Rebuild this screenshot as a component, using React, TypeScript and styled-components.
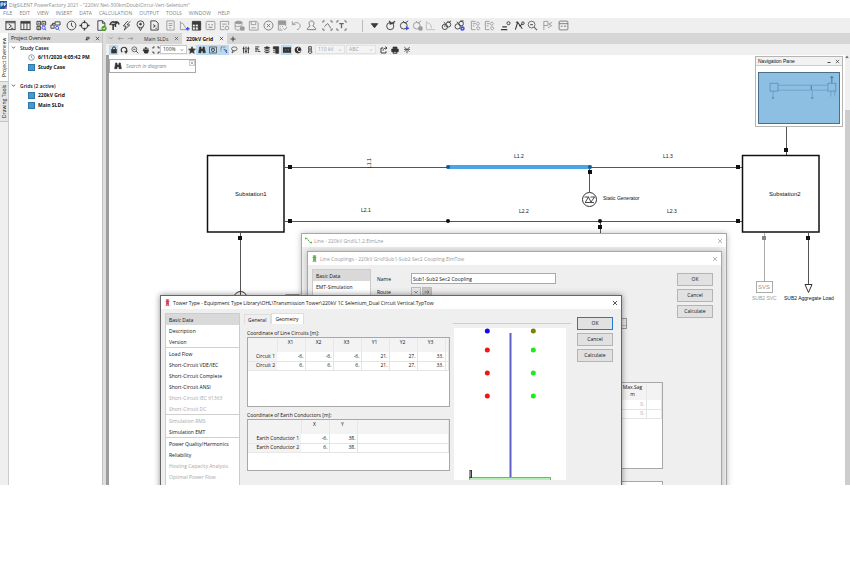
import React from "react";
import styled, { createGlobalStyle, css } from "styled-components";

const GlobalStyle = createGlobalStyle`
  * { box-sizing: border-box; }
  body {
    margin: 0;
    background: #fff;
    color: #111;
    font: 5px/8px "Open Sans", "Noto Sans", sans-serif;
  }
  button, input, select { font: inherit; color: inherit; margin: 0; padding: 0; border: 0; background: none; }
  button { cursor: pointer; }
`;

/* ---------- icons, drawn on a 12 x 12 grid ---------- */

const BLUE = "#3a55e8";

const icons: Record<string, React.ReactNode> = {
  console: <><rect x="1" y="1.5" width="10" height="9" /><path d="M1 3h10M4 4.5l3 2-3 2.5M6.5 9H9" /></>,
  columns: <><rect x="1" y="1.5" width="10" height="9" /><path d="M1 3h10" strokeWidth="1.8" /><path d="M4.2 3v7.5M7.6 3v7.5" /></>,
  modules: <><path d="M1 1.500h4v4H1zM6.500 1.500h4v4h-4zM1 7h4v3.500H1z" /><path d="M2 3.500h2M7.500 3.500h2M2 8.800h2" /><circle cx="8.300" cy="8.500" r="1.800" stroke={BLUE} /><path d="M9.600 9.800l1.500 1.400" stroke={BLUE} /></>,
  network: <><path d="M5.500 2h5.500v3.500H5.500zM1 5.500h3.500v3.500H1zM2.700 5.500V3.700h2.800" /><circle cx="7.800" cy="8.600" r="1.700" stroke={BLUE} /><path d="M9 9.800l1.500 1.400" stroke={BLUE} /></>,
  clock: <><circle cx="6" cy="6" r="4.800" /><path d="M6 3v3.200l2 1.300" /></>,
  target: <><circle cx="6" cy="6" r="3.600" /><path d="M6 .5v3M6 8.500v3M.5 6h3M8.500 6h3" strokeWidth="1.600" /></>,
  fileCheck: <><path d="M2 .8h5l2.700 2.700v7.700H2zM7 .8v2.700h2.700" /><circle cx="8.800" cy="9" r="2.800" fill="#45a81c" stroke="none" /><path d="M7.500 9l1 1 1.600-1.900" stroke="#fff" /></>,
  pylon: <><path d="M1 5.500C2 2 4 1.500 6 2.500c2-1 4-.5 5 2.500M4.500 11V4M7 7.500V4M2.500 5h4l2-2" strokeWidth="1.700" /></>,
  bolt: <path d="M7.500 1L2.500 6.500l3 .3L3.500 11 9.500 5.500l-3-.3L10 1.500" />,
  pin: <><circle cx="6" cy="4.700" r="3.800" /><circle cx="6" cy="4.500" r="1" fill="currentColor" /><path d="M4 8l2 3.500L8 8" /></>,
  script: <><path d="M2 1h5.500L10 3.500V11H2z" /><path d="M4.500 5l2.500 1.500L4.500 8M7 9h1.500" /></>,
  page: <><path d="M2 1h8v10H2z" /><path d="M4 4h4M4 6h4M4.500 8.500h2.500" /></>,
  curve: <><path d="M1.500 1.500v9H10M2 3c4 0 4 6 6 6" /><path d="M9.500 7.500v4M7.500 9.500h4" stroke={BLUE} strokeWidth="1.500" /></>,
  tableDark: <><path d="M1.500 1.500h9v3h-9z" fill="currentColor" /><path d="M8 4h2.500v7H8z" fill="currentColor" /><path d="M1.500 4v7H8M4.700 4v7M1.500 7.500H8" /></>,
  dots: <><rect x="1.200" y="1.500" width="9.600" height="9" rx="1" /><path d="M3.500 5h1.500M7 5h1.500M4 8h4" strokeWidth="1.500" /></>,
  dotsEdit: <><path d="M10.500 5.500V1.500H1.500v9H6" /><path d="M3.500 4.500h5M3.500 7h2" /><circle cx="8.700" cy="8.800" r="2" /></>,
  database: <><ellipse cx="5" cy="2.700" rx="3.800" ry="1.400" fill="currentColor" /><path d="M1.200 2.700v7c1 1.500 4 1.500 5 1M8.800 2.700v3M1.200 6c1 1.500 4 1.500 7 0" /><path d="M7 7.500h4v3.500H7z" fill="currentColor" /></>,
  save: <><path d="M1.500 1.500h8l1.500 1.500v8H1.500z" /><path d="M3.500 1.500V5h5V1.500M3.500 8.500h5" /></>,
  cancel: <><circle cx="6" cy="6" r="4.900" /><path d="M4.200 4.200l3.600 3.600M7.800 4.200L4.200 7.800" /></>,
  calc: <><path d="M1.500 1h8v4h-8z" fill="currentColor" /><path d="M1.500 5v6H6M9.500 5v1.500M3 7.200h1M5.500 7.200h1M3 9.300h1M7 9l1.500 1.700L11 7.500" /></>,
  undo: <path d="M1.500 1.500V5h3.500M1.700 5C4 1.500 10 2.500 10 6.500 10 9 8 10 6.500 10.700" />,
  stamp: <path d="M4.500 6.500C2 3 4 1 6 1s4 2 1.500 5.500L10.500 9v1.500h-9V9z" />,
  framePeak: <><path d="M3 1H1v2M9 1h2v2M3 11H1V9M9 11h2V9" /><path d="M2.500 7.500C4 6.500 5 4 6 4s2 3 3.500 5" /></>,
  frameText: <><path d="M3 1H1v2M9 1h2v2M3 11H1V9M9 11h2V9" /><path d="M3.500 4h5M6 4v5" strokeWidth="1.400" /></>,
  triangle: <path d="M2.500 4h7L6 8.500z" fill="currentColor" />,
  timer: <><circle cx="5.700" cy="6.700" r="3.900" /><path d="M4.500 1l2.500 3 4-2.700M5.700 2.800v2.500M9 3l1 1" strokeWidth="1.300" /></>,
  timerRun: <><circle cx="5.200" cy="6.200" r="3.700" /><path d="M4.500 1l2 2.500L10 1" /><path d="M7.500 6.500l4 2.500-4 2.500z" fill={BLUE} stroke="none" /></>,
  timerStop: <><circle cx="5.200" cy="6.200" r="3.700" /><path d="M4.500 1l2 2.500L10 1" /><path d="M7.500 7.500h3.500V11H7.500z" fill="currentColor" /></>,
  axes: <path d="M1.500 1.500v9H11M2 3c3 0 5 2 5 6" />,
  twins: <><circle cx="4.200" cy="7.500" r="2.900" /><circle cx="8" cy="5" r="2.700" /><path d="M3 2.500l2 1.500M7 1l1.500 1.500L11 1M4.200 6v1.500" /></>,
  twinsGear: <><circle cx="4" cy="7" r="2.900" /><circle cx="7.800" cy="4" r="2.500" /><path d="M3 2l2 1.500M7 1h3.500" /><circle cx="9.200" cy="9.300" r="1.600" stroke={BLUE} strokeWidth="1.800" /></>,
  docStar: <><path d="M6 1.500H1.500v9H6M3 4h3M3 6.500h2" /><path d="M8.500 2l2 2-2 2-2-2zM7 9l1.500-2L11 9l-2 2z" /></>,
  bars: <><path d="M1 10.500h7M2.500 7.500h5" strokeWidth="1.600" /><circle cx="9.300" cy="3.500" r="1.700" /></>,
  branch: <><path d="M1.500 10.500L4 2.500 9 9.500M2 2.500h2.500M6 7L9 4.500" strokeWidth="1.200" /><circle cx="9.700" cy="3.500" r="1.400" /></>,
  zoom: <><circle cx="5" cy="5" r="3.700" /><path d="M7.700 7.700L11 11M3.500 5h3" strokeWidth="1.300" /></>,
  flag: <><path d="M2 11V1.500h4.500V6H2" /><path d="M11 2.500L7.500 4.500 11 6.500M6.500 8.500L9.500 7" /></>,
  report: <><rect x="1.200" y="1.200" width="9.600" height="9.600" rx="1" /><path d="M1.200 4h9.600M3 6.800h2M6.500 6.800h2.500" /></>,
  lock: <><path d="M3.800 5V3.500a2.200 2.200 0 014.400 0V5" strokeWidth="1.500" /><rect x="2.500" y="5" width="7" height="5.500" fill="currentColor" /></>,
  refresh: <><path d="M3.500 9.500A4.200 4.200 0 119 9" strokeWidth="1.700" /><path d="M7 8l4-.5-2 3.700z" fill="currentColor" /></>,
  hand: <path d="M3 6V3.500M5 5V1.500M7 5V2M9 5.500V3.500M1.500 6.500L3.500 8.500 4 10.500h4.500L9.500 6H3z" fill="currentColor" strokeWidth="1.500" />,
  frame: <path d="M4 1.500H1.500V4M8 1.500h2.500V4M4 10.500H1.500V8M8 10.500h2.500V8" strokeWidth="1.400" />,
  star: <path d="M6 1l1.500 3.500 3.700.3-2.800 2.500.9 3.700L6 9l-3.300 2 .9-3.700L.8 4.800l3.700-.3z" fill="currentColor" />,
  binoculars: <path d="M2.500 1.500h2v3h3v-3h2L11 10H7.500V7h-3v3H1z" fill="currentColor" />,
  monitor: <><rect x="1" y="1.500" width="10" height="9" /><path d="M4 4h4v3.500L6 9 4 7.500z" strokeWidth="1.300" /></>,
  select: <><path d="M8 1.500H1.500V8" strokeDasharray="1.500 1" /><path d="M5.500 5l5 2-2 .8 2 2.700" stroke="#2b4fa0" strokeWidth="1.400" /></>,
  lasso: <><ellipse cx="6.500" cy="4.200" rx="4.200" ry="2.900" /><path d="M4 6.500L3 10.500l4-3" /></>,
  sliders: <path d="M2.500 1v10M6 1v10M9.500 1v10M1 4h3M4.500 8h3M8 4h3" strokeWidth="1.500" />,
  list: <path d="M2 1.500h7M2 4h5M2 6.500h7M2 9h4M7 9.500h4" strokeWidth="1.500" />,
  layers: <path d="M6 1l4 1.700-4 1.700-4-1.700zM2 5.500l4 1.800 4-1.800M2 8.500l4 2 4-2" fill="currentColor" strokeWidth="1.200" />,
  book: <><path d="M2 1h8v10H5.500V4.500H2z" fill="currentColor" /><path d="M1.500 7h3M1.500 9.500h3" /></>,
  chip: <><rect x="0" y="2.500" width="12" height="7" fill="currentColor" /><path d="M3 6h2M7 6h2" stroke="#8fb6dc" /></>,
  moon: <><circle cx="6" cy="6" r="4.600" fill="currentColor" /><path d="M7 2.500a3 3 0 103 5" stroke="#f4f4f4" strokeWidth="1.500" /></>,
  gauge: <path d="M4 1h4v6l1 2.500L7 11H5L3.500 9.500 4 7zM6 3v6" strokeWidth="1.300" />,
  open: <path d="M5 3H1.500v7.500H9V8M4.500 7C5 4 7 3 10 3M8 1l2.500 2L8 5" strokeWidth="1.400" />,
  printer: <><path d="M3 1.500h6V4H3zM1 4.500h10v4H1zM3 7.500h6v3.500H3z" fill="currentColor" /><path d="M4 9.500h4" stroke="#fff" /></>,
  wand: <path d="M6 5.500V11M2 1.500l4 4 4-4M2.500 8.500l1.500-2M9.500 8.500L8 6.500M1.500 5h9" strokeWidth="1.200" />,
  linePath: <path d="M1 1v3M1 2.500h3M4.500 4l3 4M8 9.500h3M11 8v3" stroke="#58a23d" strokeWidth="1.600" />,
  tower: <path d="M3 1.500h6M2.500 4.500h7M4 7.500h4M3 10.800h6M4.800 1.500L4 11M7.200 1.500L8 11M6 1v9" strokeWidth="1.200" />,
  close: <path d="M2 2l8 8M10 2l-8 8" strokeWidth="1.400" />,
  pinned: <path d="M4 3h6v4H4zM2 9h5M3 7v3" strokeWidth="1.600" />,
  minimize: <path d="M3 9h6" strokeWidth="1.500" />,
  down: <path d="M2.500 4L6 8l3.500-4" strokeWidth="1.500" />,
  left: <path d="M11 6H2M5 3L2 6l3 3" strokeWidth="1.400" />,
  right: <path d="M1 6h9M7 3l3 3-3 3" strokeWidth="1.400" />,
  up: <path d="M2 8l4-5 4 5z" fill="currentColor" />,
  plus: <path d="M6 1v10M1 6h10" strokeWidth="1.800" />,
};

const Glyph = styled.svg<{ $size: number }>`
  display: block;
  flex: none;
  width: ${(p) => p.$size}px;
  height: ${(p) => p.$size}px;
  fill: none;
  stroke: currentColor;
  stroke-width: 1;
`;

const Icon = ({ name, size = 11 }: { name: string; size?: number }) => (
  <Glyph $size={size} viewBox="0 0 12 12" aria-hidden="true">{icons[name]}</Glyph>
);

/* ---------- application frame ---------- */

const Shell = styled.div`
  display: flex;
  flex-direction: column;
  overflow: hidden;
`;

const TitleBar = styled.header`
  display: flex;
  align-items: center;
  gap: 2px;
  height: 9px;
  color: #8c8c8c;
`;

const Logo = styled.svg`
  width: 7px;
  height: 8px;
`;

const MenuBar = styled.nav`
  display: flex;
  align-items: center;
  gap: 7px;
  height: 9px;
  padding-left: 3px;
`;

const MenuItem = styled.button`
  color: #808080;
  line-height: 9px;
`;

const MainToolbar = styled.div`
  display: flex;
  align-items: center;
  height: 15px;
  padding-left: 5px;
  background: #efefef;
`;

const Tool = styled.button<{ $w: number; $tone?: string }>`
  flex: none;
  width: ${(p) => p.$w}px;
  color: ${(p) => p.$tone ?? "#4a4a4a"};
`;

const Divider = styled.span`
  flex: none;
  width: 1px;
  height: 12px;
  margin: 0 6px 0 12px;
  background: #bbb;
`;

const Workspace = styled.div`
  display: flex;
  align-items: stretch;
`;

const Rail = styled.div`
  display: flex;
  flex-direction: column;
  flex: none;
  width: 9px;
  background: #efefef;
  border-right: 1px solid #ccc;
`;

const RailTab = styled.button<{ $active?: boolean; $h: number }>`
  height: ${(p) => p.$h}px;
  writing-mode: vertical-rl;
  transform: rotate(180deg);
  line-height: 8px;
  background: ${(p) => (p.$active ? "#fff" : "#e6e6e6")};
  border-top: 1px solid #c4c4c4;
`;

const Sidebar = styled.aside`
  flex: none;
  width: 94px;
  border-right: 1px solid #c4c4c4;
`;

const PanelHeader = styled.div`
  display: flex;
  align-items: center;
  gap: 5px;
  height: 10px;
  padding: 0 2px;
  background: #d9d9d9;
`;

const PanelTitle = styled.span`
  flex: 1;
`;

const Tree = styled.ul`
  list-style: none;
  margin: 0;
  padding: 0;
`;

const Branch = styled.li`
  font-weight: 600;
  padding: 0 0 9px 2px;
`;

const BranchLabel = styled.button`
  display: flex;
  align-items: center;
  gap: 4px;
  height: 9px;
  font-weight: 600;
`;

const Leaf = styled.li`
  display: flex;
  align-items: center;
  gap: 3px;
  height: 10px;
  padding-left: 17px;
  white-space: nowrap;
  font-weight: 700;
`;

const Swatch = styled.span`
  flex: none;
  width: 7px;
  height: 7px;
  background: #4a98ca;
  border: 1px solid #2c78ab;
`;

const LeafIcon = styled.span`
  color: #4b6478;
`;

const Splitter = styled.div`
  flex: none;
  width: 3px;
  background: #dedede;
`;

const DiagramArea = styled.main`
  display: flex;
  flex-direction: column;
  flex: 1;
  min-width: 0;
`;

const TabStrip = styled.div`
  display: flex;
  align-items: center;
  height: 11px;
  padding-left: 2px;
  color: #333;
  background: #d6d6d6;
`;

const History = styled.span`
  display: flex;
  gap: 3px;
  width: 32px;
  color: #999;
`;

const DiagramTab = styled.button<{ $active?: boolean }>`
  display: flex;
  align-items: center;
  gap: 6px;
  height: 11px;
  padding: 0 3px 0 4px;
  ${(p) => p.$active && css`background: #f1f1f1; color: #111; font-weight: 700;`}
`;

const NewTab = styled.button`
  margin-left: 3px;
`;

const DiagramToolbar = styled.div`
  display: flex;
  align-items: center;
  height: 11px;
  padding-left: 3px;
  background: #efefef;
  color: #333;
`;

const DTool = styled.button<{ $w: number; $on?: boolean }>`
  display: flex;
  align-items: center;
  justify-content: center;
  flex: none;
  width: ${(p) => p.$w}px;
  height: 10px;
  background: ${(p) => (p.$on ? "#bcd9ee" : "transparent")};
`;

const Picker = styled.label<{ $w: number; $muted?: boolean }>`
  display: flex;
  align-items: center;
  flex: none;
  width: ${(p) => p.$w}px;
  height: 9px;
  margin-right: 1px;
  padding: 0 2px;
  background: ${(p) => (p.$muted ? "#f4f4f4" : "#fff")};
  border: 1px solid ${(p) => (p.$muted ? "#e2e2e2" : "#c8c8c8")};
  color: ${(p) => (p.$muted ? "#a0a0a0" : "#333")};
`;

const PickerSelect = styled.select`
  flex: 1;
  min-width: 0;
  appearance: none;
  outline: 0;
  line-height: 7px;
`;

const CanvasRow = styled.div`
  display: flex;
`;

const Gutter = styled.div`
  flex: none;
  width: 3px;
  background: #9d9d9d;
`;

const Canvas = styled.section`
  position: relative;
  flex: 1;
  min-height: 430px;
  overflow: hidden;
  background: #fff;
`;

const Scrollbar = styled.div`
  display: flex;
  flex-direction: column;
  flex: none;
  width: 5px;
  background: #f0f0f0;
  color: #555;
`;

const Thumb = styled.div`
  flex: 1;
  margin-top: 51px;
  background: #cdcdcd;
`;

/* ---------- single line diagram ---------- */

const Drawing = styled.svg`
  position: absolute;
  left: 0;
  top: 0;
  width: 100%;
  height: 100%;
  font: 5px "Liberation Sans", Arial, sans-serif;
`;

const Dot = ({ x, y, c = "#111" }: { x: number; y: number; c?: string }) => <circle cx={x} cy={y} r="2" fill={c} />;
const Sq = ({ x, y, c = "#111" }: { x: number; y: number; c?: string }) => <rect x={x - 2} y={y - 2} width="4" height="4" fill={c} />;

const Diagram = () => (
  <Drawing role="img" aria-label="220kV Grid single line diagram">
    <g transform="translate(-109 -55)">
      <g stroke="#555" strokeWidth="1" fill="none">
        <path d="M285 167.500H742M285 221.500H742" />
        <path d="M240.500 233V296M589.500 167V192M600.500 221V240M786.500 126V155M808.500 233V284" />
        <path d="M764.500 233V281" stroke="#aaa" />
      </g>
      <path d="M448 167H590" stroke="#4aa5e6" strokeWidth="4" />
      <g fill="none" stroke="#111" strokeWidth="1.500">
        <rect x="207.500" y="155.500" width="76.500" height="76.500" />
        <rect x="742.500" y="155.500" width="76.500" height="76.500" />
      </g>
      <Sq x={290} y={167} /><Sq x={290} y={221} /><Sq x={240} y={238} />
      <Sq x={738} y={167} /><Sq x={738} y={221} /><Sq x={786} y={150} />
      <Sq x={590} y={172} /><Sq x={600} y={227} /><Sq x={808} y={238} />
      <Sq x={764} y={238} c="#888" />
      <Dot x={448} y={167} c="#135a96" /><Dot x={590} y={167} c="#135a96" />
      <Dot x={448} y={221} /><Dot x={600} y={221} />
      <g fill="none" stroke="#333" strokeWidth="1">
        <circle cx="589.500" cy="199.500" r="7" />
        <path d="M584.500 197h4.500M585 202.500h9M590.500 197h4.500M585.500 202l3-5 2.500 5 3.500-5" strokeWidth="0.900" />
        <circle cx="240.500" cy="298" r="6.500" />
        <path d="M237.500 299v-4l3 3 3-3v4M285.500 300v-5h14" />
        <path d="M805 284.500h7l-3.500 8z" />
      </g>
      <rect x="756.500" y="281.500" width="16" height="11" fill="none" stroke="#aaa" />
      <g fontSize="6" fill="#111">
        <text x="235" y="196">Substation1</text>
        <text x="769" y="196">Substation2</text>
      </g>
      <g fill="#111">
        <text transform="translate(371 168) rotate(-90)">L1.1</text>
        <text x="514" y="158">L1.2</text>
        <text x="663" y="158">L1.3</text>
        <text x="361" y="212">L2.1</text>
        <text x="519" y="213">L2.2</text>
        <text x="667" y="213">L2.3</text>
        <text x="603" y="200">Static Generator</text>
        <text x="784" y="300">SUB2 Aggregate Load</text>
      </g>
      <g fill="#999">
        <text x="758" y="289" fontSize="6">SVS</text>
        <text x="752" y="300">SUB2 SVC</text>
      </g>
    </g>
  </Drawing>
);

/* ---------- floating panes ---------- */

const SearchPane = styled.form`
  position: absolute;
  left: 0;
  top: 4px;
  display: flex;
  align-items: center;
  gap: 4px;
  width: 87px;
  height: 14px;
  padding-left: 4px;
  background: #fff;
  border: 1px solid #aaa;
  color: #333;
`;

const SearchInput = styled.input`
  flex: 1;
  min-width: 0;
  font-style: italic;
  outline: 0;
  &::placeholder { color: #888; opacity: 1; }
`;

const CornerClose = styled.button`
  align-self: flex-start;
  color: #555;
  border: 1px solid #ccc;
`;

const NavPane = styled.section`
  position: absolute;
  right: 2px;
  top: 1px;
  width: 88px;
  background: #fff;
  border: 1px solid #b5b5b5;
`;

const NavHeader = styled.div`
  display: flex;
  align-items: center;
  gap: 3px;
  height: 9px;
  padding: 0 2px;
  background: #f2f2f2;
  border-bottom: 1px solid #ccc;
  font: 5px/8px "Liberation Sans", Arial, sans-serif;
`;

const NavMap = styled.svg`
  display: block;
  width: 82px;
  height: 52px;
  margin: 6px 2px 2px;
  background: #8cbfe2;
  border: 1px solid #4b6f8b;
`;

const NavigationPane = () => (
  <NavPane>
    <NavHeader>
      <PanelTitle>Navigation Pane</PanelTitle>
      <button aria-label="Minimize"><Icon name="minimize" size={6} /></button>
      <button aria-label="Close"><Icon name="close" size={5} /></button>
    </NavHeader>
    <NavMap viewBox="0 0 80 51" fill="none" stroke="#6396c4" strokeWidth="1">
      <rect x="10.500" y="10.500" width="8" height="8" /><rect x="69.500" y="10.500" width="8" height="8" />
      <path d="M18 12.500h51M18 17.500h51M13.500 18v8M53.500 17v9M72.500 18v6M76.500 18v6" strokeWidth="0.700" />
      <path d="M73.500 3v7M52.500 13v4M12.500 25.500h2M52.500 25.500h2M72 4.500h3" stroke="#3f74a8" />
    </NavMap>
  </NavPane>
);

/* ---------- dialogs ---------- */

const Dialog = styled.section<{ $x: number; $y: number; $w: number; $active?: boolean }>`
  position: absolute;
  left: ${(p) => p.$x}px;
  top: ${(p) => p.$y}px;
  bottom: -10px;
  width: ${(p) => p.$w}px;
  background: #efefef;
  border: 1px solid ${(p) => (p.$active ? "#666" : "#a8a8a8")};
  box-shadow: 0 0 6px rgba(0, 0, 0, ${(p) => (p.$active ? 0.45 : 0.25)});
`;

const DialogTitle = styled.div<{ $active?: boolean }>`
  display: flex;
  align-items: center;
  gap: 2px;
  height: 13px;
  padding: 0 3px;
  white-space: nowrap;
  background: #fff;
  color: ${(p) => (p.$active ? "#111" : "#9a9a9a")};
`;

const TitleIcon = styled.span<{ $c: string }>`
  color: ${(p) => p.$c};
`;

const Titled = ({ icon, color, title, active }: { icon: string; color: string; title: string; active?: boolean }) => (
  <DialogTitle $active={active}>
    <TitleIcon $c={color}><Icon name={icon} size={7} /></TitleIcon>
    <PanelTitle>{title}</PanelTitle>
    <button aria-label="Close"><Icon name="close" size={6} /></button>
  </DialogTitle>
);

const DialogBody = styled.div`
  display: flex;
  align-items: flex-start;
`;

const Pages = styled.ul<{ $w: number }>`
  flex: none;
  list-style: none;
  width: ${(p) => p.$w}px;
  min-height: 190px;
  margin: 4px 0 0 4px;
  padding: 0;
  background: #fff;
  border: 1px solid #ccc;
`;

const PageRow = styled.li<{ $rule?: boolean }>`
  ${(p) => p.$rule && css`border-top: 1px solid #d0d0d0;`}
`;

const PageButton = styled.button<{ $on?: boolean; $off?: boolean }>`
  display: block;
  width: 100%;
  height: 11px;
  padding-left: 3px;
  text-align: left;
  white-space: nowrap;
  background: ${(p) => (p.$on ? "#d9d9d9" : "transparent")};
  color: ${(p) => (p.$off ? "#a8a8a8" : "#111")};
`;

const Actions = styled.div`
  display: flex;
  flex-direction: column;
  flex: none;
  gap: 3px;
  padding: 8px 8px 0 0;
`;

const ActionButton = styled.button<{ $primary?: boolean }>`
  width: 36px;
  height: 13px;
  line-height: 9px;
  background: #e1e1e1;
  border: 1px solid ${(p) => (p.$primary ? "#1f7ad0" : "#b4b4b4")};
`;

const ActionSet = ({ primary }: { primary?: boolean }) => (
  <Actions>
    <ActionButton $primary={primary}>OK</ActionButton>
    <ActionButton>Cancel</ActionButton>
    <ActionButton>Calculate</ActionButton>
  </Actions>
);

const Fields = styled.div`
  display: grid;
  flex: 1;
  grid-template-columns: 34px 145px;
  grid-auto-rows: 11px;
  align-items: center;
  row-gap: 2px;
  padding: 8px 0 0 6px;
`;

const NameInput = styled.input`
  height: 11px;
  padding: 0 1px;
  background: #fff;
  border: 1px solid #aaa;
  outline: 0;
`;

const RouteButtons = styled.div`
  display: flex;
  gap: 1px;
`;

const RouteButton = styled.button<{ $off?: boolean }>`
  display: grid;
  place-items: center;
  width: 10px;
  height: 9px;
  background: ${(p) => (p.$off ? "#c6c6c6" : "#e6e6e6")};
  border: 1px solid #bbb;
  color: #666;
`;

/* The lower part of the couplings form, mostly behind the tower dialog. */
const CouplingLower = styled.div`
  position: absolute;
  left: 260px;
  top: 66px;
  display: flex;
  flex-direction: column;
  width: 95px;
`;

const SmallBox = styled.button`
  align-self: flex-start;
  width: 59px;
  height: 11px;
  margin-bottom: 53px;
  text-align: right;
  background: #e6e6e6;
  border: 1px solid #999;
`;

const GridBox = styled.div<{ $h: number }>`
  height: ${(p) => p.$h}px;
  background: #fff;
  border: 1px solid #a8a8a8;
  overflow: hidden;
`;

const LowerBox = styled(GridBox)`
  margin-top: 12px;
`;

const Grid = styled.table`
  width: 100%;
  table-layout: fixed;
  border-collapse: collapse;
  line-height: 7px;
`;

const Head = styled.th<{ $h: number }>`
  height: ${(p) => p.$h}px;
  padding: 1px 1px 0 0;
  vertical-align: top;
  font-weight: 400;
  text-align: center;
  background: #f3f3f3;
  border-right: 1px solid #e8e8e8;
`;

const RowHead = styled.th`
  height: 10px;
  padding: 0 2px 0 0;
  font-weight: 400;
  text-align: right;
  white-space: nowrap;
  background: #f3f3f3;
  border-bottom: 1px solid #e8e8e8;
`;

const Cell = styled.td<{ $off?: boolean }>`
  height: 9px;
  padding: 0 1px 0 0;
  text-align: right;
  color: ${(p) => (p.$off ? "#a8a8a8" : "inherit")};
  border: solid #e4e4e4;
  border-width: 0 1px 1px 0;
`;

const LineHead = styled(RowHead)`
  height: 9px;
`;

const Col = styled.col<{ $w: number }>`
  width: ${(p) => p.$w}px;
`;

const Geometry = styled.div`
  flex: none;
  width: 213px;
  padding: 4px 3px 0 4px;
`;

const Tabs = styled.div`
  display: flex;
  align-items: flex-end;
  height: 11px;
`;

const Tab = styled.button<{ $on?: boolean }>`
  height: ${(p) => (p.$on ? 11 : 10)}px;
  padding: 0 4px 0 3px;
  background: ${(p) => (p.$on ? "#fff" : "#efefef")};
  border: 1px solid #dedede;
  border-bottom: 0;
`;

const Caption = styled.h3<{ $top: number }>`
  margin: ${(p) => p.$top}px 0 0 3px;
  font: inherit;
`;

const GridSlot = styled.div`
  margin-left: 3px;
`;

const PreviewColumn = styled.div`
  flex: 1;
  min-width: 0;
  padding-top: 14px;
`;

const Preview = styled.svg`
  display: block;
  width: 112px;
  height: 152px;
  margin: 4px 0 0 1px;
  background: #fff;
`;

const TabRule = styled.div`
  width: 118px;
  height: 1px;
  background: #cfcfcf;
`;

type Row = { label: string; values: string[] };

const DataGrid = ({ h, cols, rows, first }: { h: number; cols: string[]; rows: Row[]; first: number }) => (
  <GridBox $h={h}>
    <Grid>
      <colgroup>
        <Col $w={first} />
        {cols.map((c) => <Col key={c} $w={28} />)}
        <col />
      </colgroup>
      <thead>
        <tr>
          <Head $h={14} aria-label="Row" />
          {cols.map((c) => <Head key={c} $h={14}>{c}</Head>)}
          <Head $h={14} />
        </tr>
      </thead>
      <tbody>
        {rows.map((r) => (
          <tr key={r.label}>
            <LineHead scope="row">{r.label}</LineHead>
            {r.values.map((v, i) => <Cell key={i}>{v}</Cell>)}
            <Cell />
          </tr>
        ))}
      </tbody>
    </Grid>
  </GridBox>
);

const pages: { t: string; off?: boolean; rule?: boolean }[] = [
  { t: "Basic Data" }, { t: "Description" }, { t: "Version" },
  { t: "Load Flow", rule: true }, { t: "Short-Circuit VDE/IEC" }, { t: "Short-Circuit Complete" }, { t: "Short-Circuit ANSI" },
  { t: "Short-Circuit IEC 61363", off: true }, { t: "Short-Circuit DC", off: true },
  { t: "Simulation RMS", off: true, rule: true }, { t: "Simulation EMT" },
  { t: "Power Quality/Harmonics", rule: true }, { t: "Reliability" },
  { t: "Hosting Capacity Analysis", off: true }, { t: "Optimal Power Flow", off: true },
];

const PageList = ({ items, w }: { items: typeof pages; w: number }) => (
  <Pages $w={w}>
    {items.map((p, i) => (
      <PageRow key={p.t} $rule={p.rule}>
        <PageButton $on={i === 0} $off={p.off} disabled={p.off}>{p.t}</PageButton>
      </PageRow>
    ))}
  </Pages>
);

const CouplingDialog = () => (
  <Dialog $x={198} $y={196} $w={415}>
    <Titled icon="tower" color="#4d9a35" title="Line Couplings - 220kV Grid\Sub1-Sub2 Sec2 Coupling.ElmTow" />
    <DialogBody>
      <PageList w={59} items={[{ t: "Basic Data" }, { t: "EMT-Simulation" }, { t: "Description" }]} />
      <Fields>
        <label htmlFor="coupling-name">Name</label>
        <NameInput id="coupling-name" defaultValue="Sub1-Sub2 Sec2 Coupling" />
        <span>Route</span>
        <RouteButtons>
          <RouteButton aria-label="Select route"><Icon name="down" size={6} /></RouteButton>
          <RouteButton aria-label="Go to route" $off><Icon name="right" size={6} /></RouteButton>
        </RouteButtons>
      </Fields>
      <ActionSet />
    </DialogBody>
    <CouplingLower>
      <SmallBox>...</SmallBox>
      <GridBox $h={87}>
        <Grid>
          <colgroup><Col $w={51} /><Col $w={26} /><col /></colgroup>
          <thead><tr><Head $h={17} /><Head $h={17}>Max.Sag<br />m</Head><Head $h={17} /></tr></thead>
          <tbody>
            <tr><Cell /><Cell $off>0.</Cell><Cell /></tr>
            <tr><Cell /><Cell $off>0.</Cell><Cell /></tr>
          </tbody>
        </Grid>
      </GridBox>
      <LowerBox $h={20} />
    </CouplingLower>
  </Dialog>
);

const TowerPreview = () => (
  <Preview viewBox="454 328 112 152" role="img" aria-label="Tower geometry">
    <rect x="469.500" y="477.500" width="81" height="4" fill="#b4f0b4" stroke="#5fc25f" />
    <rect x="470" y="470.500" width="1.500" height="7" fill="#ddd" stroke="#333" />
    <rect x="509.500" y="333" width="2" height="144" fill="#5f5fc4" />
    <circle cx="487.300" cy="331" r="2.500" fill="#0d0de6" />
    <circle cx="533.300" cy="331" r="2.500" fill="#7d7d10" />
    {[350, 373, 396].map((y) => (
      <g key={y}>
        <circle cx="487.300" cy={y} r="2.500" fill="#f01616" />
        <circle cx="533.300" cy={y} r="2.500" fill="#1bea1b" />
      </g>
    ))}
  </Preview>
);

const TowerDialog = () => (
  <Dialog $x={51} $y={240} $w={462} $active>
    <Titled active icon="tower" color="#cc1f3c" title="Tower Type - Equipment Type Library\OHL\Transmission Tower\220kV 1C Selenium_Dual Circuit Vertical.TypTow" />
    <DialogBody>
      <PageList items={pages} w={75} />
      <Geometry>
        <Tabs role="tablist">
          <Tab role="tab">General</Tab>
          <Tab role="tab" $on aria-selected>Geometry</Tab>
        </Tabs>
        <Caption $top={5}>Coordinate of Line Circuits [m]:</Caption>
        <GridSlot>
          <DataGrid
            h={70} first={29} cols={["X1", "X2", "X3", "Y1", "Y2", "Y3"]}
            rows={[
              { label: "Circuit 1", values: ["-6.", "-6.", "-6.", "21.", "27.", "33."] },
              { label: "Circuit 2", values: ["6.", "6.", "6.", "21.", "27.", "33."] },
            ]}
          />
        </GridSlot>
        <Caption $top={4}>Coordinate of Earth Conductors [m]:</Caption>
        <GridSlot>
          <DataGrid
            h={52} first={53} cols={["X", "Y"]}
            rows={[
              { label: "Earth Conductor 1", values: ["-6.", "38."] },
              { label: "Earth Conductor 2", values: ["6.", "38."] },
            ]}
          />
        </GridSlot>
      </Geometry>
      <PreviewColumn>
        <TabRule />
        <TowerPreview />
      </PreviewColumn>
      <ActionSet primary />
    </DialogBody>
  </Dialog>
);

/* ---------- toolbars ---------- */

const DARK = "#3c3c3c";
const SOFT = "#999";
const FAINT = "#bdbdbd";

const mainTools: [string, number, string][] = [
  ["console", 15, DARK], ["columns", 16, DARK], ["modules", 14, DARK], ["network", 16, DARK], ["clock", 13, DARK],
  ["target", 17, DARK], ["fileCheck", 13, DARK], ["pylon", 12, DARK], ["bolt", 14, DARK], ["pin", 14, DARK],
  ["script", 16, DARK], ["page", 14, SOFT], ["curve", 12, SOFT], ["tableDark", 14, DARK], ["dots", 14, SOFT],
  ["dotsEdit", 15, SOFT], ["database", 14, SOFT], ["save", 15, SOFT], ["cancel", 14, "#777"], ["calc", 14, SOFT],
  ["undo", 15, SOFT], ["stamp", 16, "#777"], ["framePeak", 14, "#666"], ["frameText", 14, "#666"],
];

const runTools: [string, number, string][] = [
  ["triangle", 16, DARK], ["timer", 14, DARK], ["timerRun", 13, DARK], ["timerStop", 13, SOFT], ["axes", 16, FAINT],
  ["twins", 13, DARK], ["twinsGear", 16, DARK], ["docStar", 14, SOFT], ["docStar", 16, SOFT], ["bars", 14, DARK],
  ["branch", 13, DARK], ["zoom", 15, "#666"], ["flag", 16, SOFT], ["report", 14, "#777"],
];

const menus = ["FILE", "EDIT", "VIEW", "INSERT", "DATA", "CALCULATION", "OUTPUT", "TOOLS", "WINDOW", "HELP"];

export default function App() {
  return (
    <Shell>
      <GlobalStyle />
      <TitleBar>
        <Logo viewBox="0 0 7 8" aria-hidden="true">
          <rect width="7" height="8" fill="#1d5c9c" />
          <path d="M1 5.500V2h2v2H1M4.500 5V2H6.500M4.500 3.500h1.500" stroke="#fff" fill="none" strokeWidth="0.800" />
          <path d="M4 8h3V5z" fill="#c06ad0" />
        </Logo>
        DIgSILENT PowerFactory 2021 - "220kV Net-300kmDoublCircui-Vert-Selenium"
      </TitleBar>
      <MenuBar>{menus.map((m) => <MenuItem key={m}>{m}</MenuItem>)}</MenuBar>
      <MainToolbar>
        {mainTools.map(([n, w, c], i) => <Tool key={i} $w={w} $tone={c} aria-label={n}><Icon name={n} /></Tool>)}
        <Divider />
        {runTools.map(([n, w, c], i) => <Tool key={i} $w={w} $tone={c} aria-label={n}><Icon name={n} /></Tool>)}
      </MainToolbar>
      <Workspace>
        <Rail>
          <RailTab $active $h={49}>Project Overview</RailTab>
          <RailTab $h={40}>Drawing Tools</RailTab>
        </Rail>
        <Sidebar>
          <PanelHeader>
            <PanelTitle>Project Overview</PanelTitle>
            <button aria-label="Pin"><Icon name="pinned" size={5} /></button>
            <button aria-label="Close"><Icon name="close" size={5} /></button>
          </PanelHeader>
          <Tree>
            <Branch>
              <BranchLabel><Icon name="down" size={5} />Study Cases</BranchLabel>
              <Tree>
                <Leaf><LeafIcon><Icon name="clock" size={7} /></LeafIcon>6/11/2020 4:05:42 PM</Leaf>
                <Leaf><Swatch />Study Case</Leaf>
              </Tree>
            </Branch>
            <Branch>
              <BranchLabel><Icon name="down" size={5} />Grids (2 active)</BranchLabel>
              <Tree>
                <Leaf><Swatch />220kV Grid</Leaf>
                <Leaf><Swatch />Main SLDs</Leaf>
              </Tree>
            </Branch>
          </Tree>
        </Sidebar>
        <Splitter />
        <DiagramArea>
          <TabStrip>
            <History>
              <Icon name="down" size={6} /><Icon name="left" size={7} /><Icon name="right" size={7} />
            </History>
            <DiagramTab>Main SLDs<Icon name="close" size={5} /></DiagramTab>
            <DiagramTab $active>220kV Grid<Icon name="close" size={5} /></DiagramTab>
            <NewTab aria-label="New tab"><Icon name="plus" size={6} /></NewTab>
          </TabStrip>
          <DiagramToolbar>
            <DTool $w={9} $on aria-label="Lock"><Icon name="lock" size={8} /></DTool>
            <DTool $w={11} aria-label="Refresh"><Icon name="refresh" size={8} /></DTool>
            <DTool $w={12} aria-label="Zoom"><Icon name="zoom" size={8} /></DTool>
            <DTool $w={10} aria-label="Pan"><Icon name="hand" size={8} /></DTool>
            <DTool $w={9} aria-label="Fit"><Icon name="frame" size={8} /></DTool>
            <Picker $w={27}>
              <PickerSelect aria-label="Zoom level"><option>100%</option></PickerSelect>
              <Icon name="down" size={4} />
            </Picker>
            <DTool $w={8} aria-label="Favourite"><Icon name="star" size={8} /></DTool>
            <DTool $w={11} $on aria-label="Search"><Icon name="binoculars" size={8} /></DTool>
            <DTool $w={11} $on aria-label="Navigation"><Icon name="monitor" size={8} /></DTool>
            <DTool $w={11} $on aria-label="Select"><Icon name="select" size={8} /></DTool>
            <DTool $w={10} aria-label="Lasso"><Icon name="lasso" size={8} /></DTool>
            <DTool $w={13} aria-label="Settings"><Icon name="sliders" size={8} /></DTool>
            <DTool $w={10} aria-label="List"><Icon name="list" size={7} /></DTool>
            <DTool $w={9} aria-label="Layers"><Icon name="layers" size={8} /></DTool>
            <DTool $w={10} aria-label="Legend"><Icon name="book" size={8} /></DTool>
            <DTool $w={11} $on aria-label="Title block"><Icon name="chip" size={8} /></DTool>
            <DTool $w={12} aria-label="Colours"><Icon name="moon" size={8} /></DTool>
            <DTool $w={11} aria-label="Heat map"><Icon name="gauge" size={8} /></DTool>
            <Picker $w={30} $muted>
              <PickerSelect aria-label="Voltage level"><option>110 kV</option></PickerSelect>
              <Icon name="down" size={4} />
            </Picker>
            <Picker $w={30} $muted>
              <PickerSelect aria-label="Phases"><option>ABC</option></PickerSelect>
              <Icon name="down" size={4} />
            </Picker>
            <DTool $w={13} aria-label="Export"><Icon name="open" size={8} /></DTool>
            <DTool $w={9} aria-label="Print"><Icon name="printer" size={8} /></DTool>
            <DTool $w={15} aria-label="Tools"><Icon name="wand" size={8} /></DTool>
          </DiagramToolbar>
          <CanvasRow>
            <Gutter />
            <Canvas>
              <Diagram />
              <SearchPane>
                <Icon name="binoculars" size={8} />
                <SearchInput placeholder="Search in diagram" aria-label="Search in diagram" />
                <CornerClose type="button" aria-label="Close search"><Icon name="close" size={4} /></CornerClose>
              </SearchPane>
              <NavigationPane />
              <Dialog $x={192} $y={178} $w={426}>
                <Titled icon="linePath" color="#58a23d" title="Line - 220kV Grid\L1.2.ElmLne" />
              </Dialog>
              <CouplingDialog />
              <TowerDialog />
            </Canvas>
            <Scrollbar><Icon name="up" size={4} /><Thumb /></Scrollbar>
          </CanvasRow>
        </DiagramArea>
      </Workspace>
    </Shell>
  );
}
